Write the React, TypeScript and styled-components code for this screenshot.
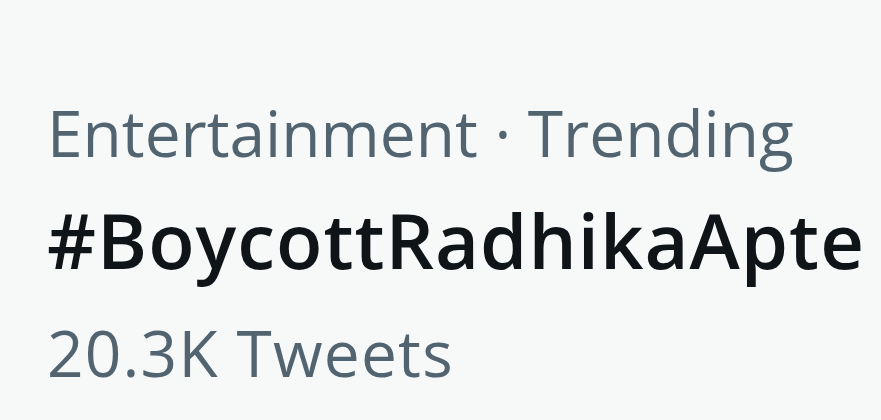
import React from "react";
import styled, { createGlobalStyle } from "styled-components";

const Global = createGlobalStyle`
  html, body { margin: 0; padding: 0; background: #f7f9f9; }
  body { font-family: "Open Sans", "Liberation Sans", sans-serif; }
`;

const Card = styled.div`
  width: 881px;
  height: 420px;
  box-sizing: border-box;
  padding: 78px 0 0 47px;
  background: #f7f9f9;
  display: flex;
  flex-direction: column;
  overflow: hidden;
`;

const Meta = styled.div<{ $spacing?: number }>`
  font-size: 64px;
  line-height: 110px;
  color: #536471;
  letter-spacing: ${(p) => p.$spacing ?? 0}px;
  white-space: nowrap;
`;

const Title = styled.div`
  font-size: 76px;
  line-height: 110px;
  margin-top: -3px;
  margin-bottom: 3px;
  font-weight: 600;
  letter-spacing: 1px;
  color: #0f1419;
  white-space: nowrap;
`;

export default function App() {
  return (
    <>
      <Global />
      <Card>
        <Meta>Entertainment · Trending</Meta>
        <Title>#BoycottRadhikaApte</Title>
        <Meta $spacing={1.2}>20.3K Tweets</Meta>
      </Card>
    </>
  );
}
